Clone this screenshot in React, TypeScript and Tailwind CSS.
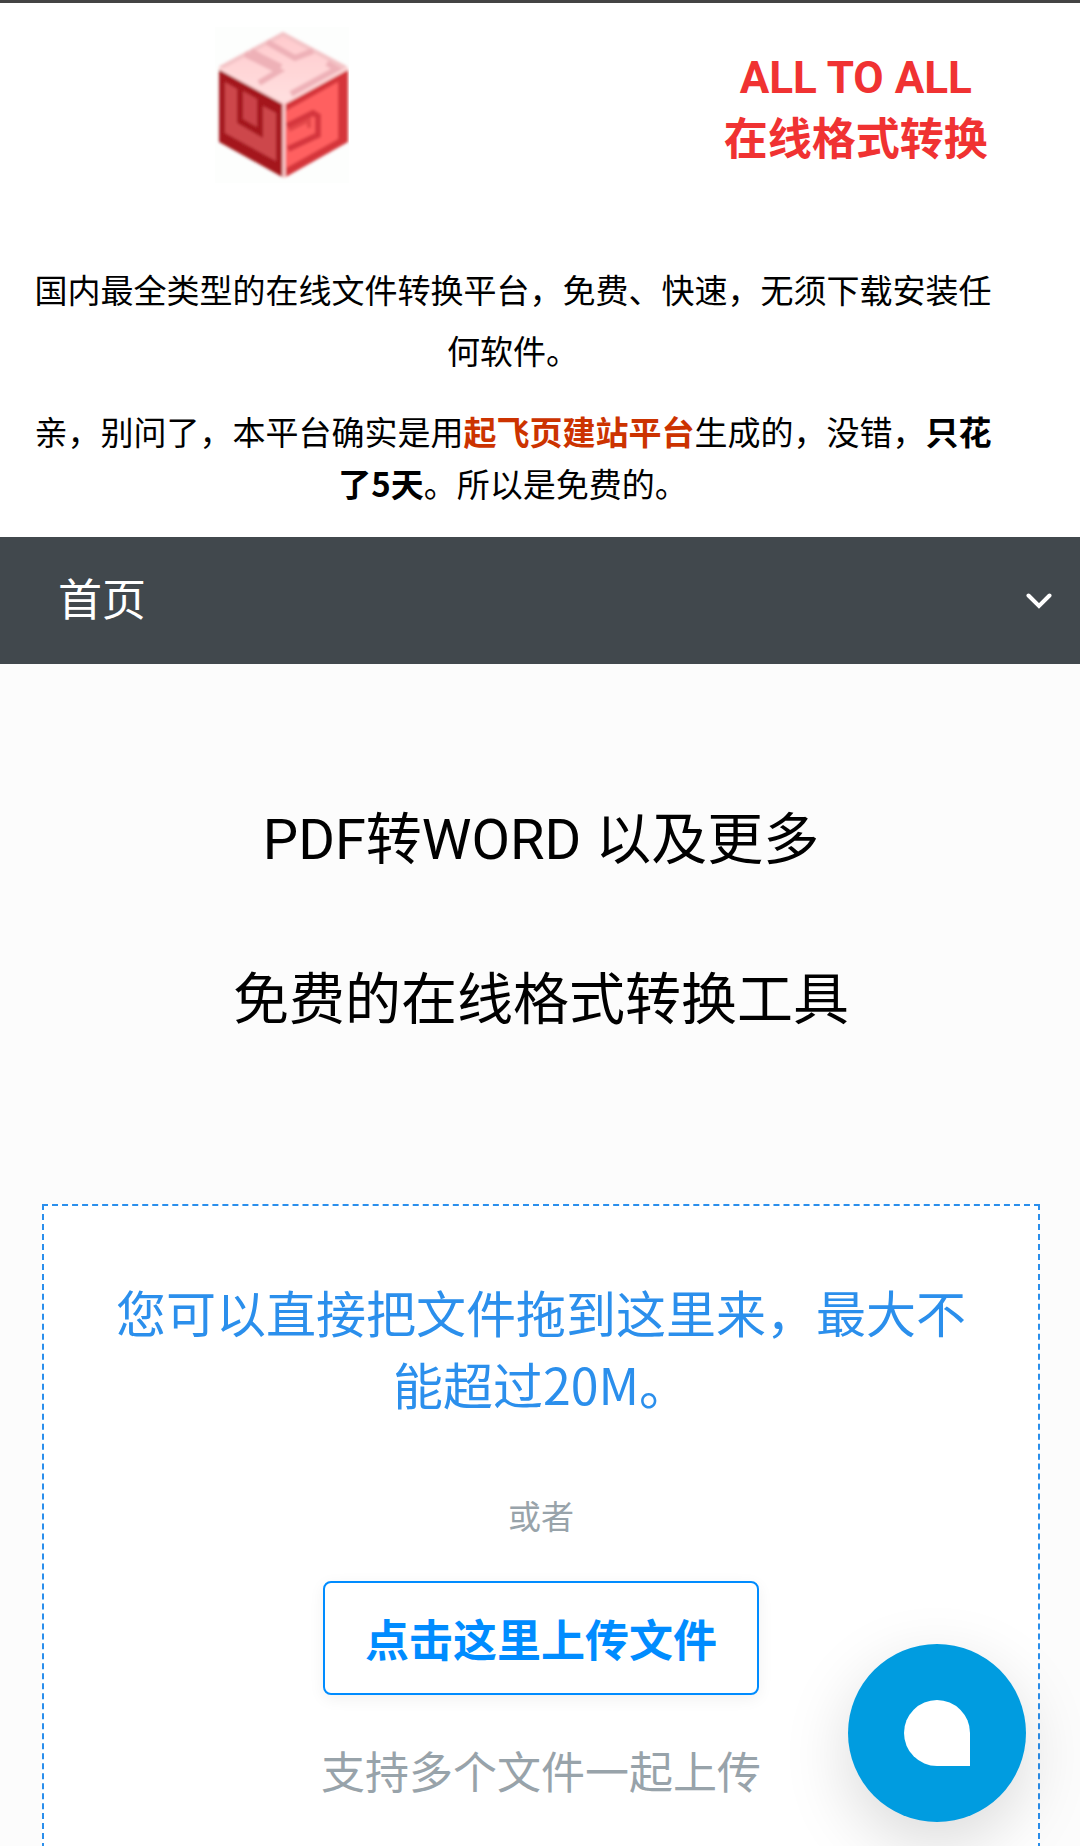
import { useState } from "react";
import { clsx } from "clsx";

const TITLES = ["PDF转WORD 以及更多", "免费的在线格式转换工具"];

const CubeLogo: React.FC = () => {
  return (
    <svg
      viewBox="0 0 134 156"
      className="h-[156px] w-[134px]"
      role="img"
      aria-label="ALL TO ALL"
    >
      <defs>
        <filter id="soft" x="-5%" y="-5%" width="110%" height="110%">
          <feGaussianBlur stdDeviation="1.6" />
        </filter>
        <linearGradient id="top" x1="0" y1="0" x2="0" y2="1">
          <stop offset="0" stopColor="#ffc9cc" />
          <stop offset="1" stopColor="#ffe0e0" />
        </linearGradient>
      </defs>
      <rect width="134" height="156" fill="#fdfefd" />
      <g filter="url(#soft)">
        {/* Top face */}
        <path d="M68 5 L133 42 L69 76 L4 42 Z" fill="url(#top)" />
        <path
          d="M5 41 L68 7 L131 41"
          fill="none"
          stroke="#f3c3c6"
          strokeWidth="4"
        />
        <path
          d="M52 15 L80 31 L98 24 M30 27 L64 44 L44 56 M36 24 L48 31 L66 40 M112 36 L122 42 L76 67"
          fill="none"
          stroke="#eeb1b7"
          strokeWidth="6"
        />
        {/* Left face */}
        <path d="M4 42 L69 77 L69 151 L4 115 Z" fill="#a4131a" />
        <path
          d="M10 55 L22 62 L22 96 L48 111 L48 79 L61 86 L61 134 L10 106 Z"
          fill="#cd464c"
        />
        <path d="M28 64 L42 72 L42 100 L28 92 Z" fill="#cb4348" />
        {/* Right face */}
        <path d="M69 77 L133 42 L133 115 L69 151 Z" fill="#d5343a" />
        <path d="M71 84 L123 55 L123 112 L71 141 Z" fill="#ff6061" />
        <path
          d="M72 99 L98 86 L103 89 L103 108 L73 122"
          fill="none"
          stroke="#d5363c"
          strokeWidth="6"
        />
        <path
          d="M74 103 L94 93 L94 101"
          fill="none"
          stroke="#e2464a"
          strokeWidth="4"
        />
        {/* Edge highlights */}
        <path
          d="M4 41 L69 76 L133 41 M69 76 L69 151"
          fill="none"
          stroke="#ffdcdc"
          strokeWidth="3"
        />
      </g>
    </svg>
  );
};

const Header: React.FC = () => {
  return (
    <header className="border-t-3 border-[#444444] bg-white pb-7">
      <div className="grid h-64 grid-cols-[52%_48%]">
        <div className="flex items-start justify-center pt-6 pl-0.5">
          <CubeLogo />
        </div>
        <h1 className="pt-11 pl-[70px] text-center font-[Roboto,'Noto_Sans_CJK_SC',sans-serif] text-[44px] leading-[62px] font-bold text-[#f03232]">
          ALL TO ALL
          <br />
          在线格式转换
        </h1>
      </div>
      <div className="space-y-6 pr-[82px] pl-7 text-center text-[33px]">
        <p className="leading-[61px]">
          国内最全类型的在线文件转换平台，免费、快速，无须下载安装任何软件。
        </p>
        <p className="leading-[52px]">
          亲，别问了，本平台确实是用
          <a href="#" className="font-bold text-[#cc3300]">
            起飞页建站平台
          </a>
          生成的，没错，<strong>只花了5天</strong>。所以是免费的。
        </p>
      </div>
    </header>
  );
};

const NavBar: React.FC = () => {
  const [open, setOpen] = useState(false);

  return (
    <nav className="bg-[#41484d] text-white">
      <button
        type="button"
        aria-expanded={open}
        onClick={() => setOpen(!open)}
        className="flex h-[127px] w-full items-center justify-between pr-7 pl-[58px] text-[44px]"
      >
        <span className="pb-2">首页</span>
        <svg
          viewBox="0 0 26 16"
          className={clsx("h-4 w-[26px]", open && "rotate-180")}
          fill="none"
          stroke="currentColor"
          strokeWidth="4"
          strokeLinecap="round"
        >
          <path d="M2.5 2.5 L13 13 L23.5 2.5" />
        </svg>
      </button>
    </nav>
  );
};

const UploadBox: React.FC = () => {
  return (
    <section className="mx-10 flex flex-col items-center border-2 border-dashed border-[#2b8fec] bg-white px-[70px] pt-[69px] pb-24 text-center text-[#98a3aa]">
      <p className="text-[50px] leading-[72px] text-[#2b8fec]">
        您可以直接把文件拖到这里来，最大不能超过20M。
      </p>
      <p className="mt-[70px] text-[33px] leading-[52px]">或者</p>
      <button
        type="button"
        className="mt-10 h-[114px] rounded-lg border-2 border-[#008cff] bg-white px-10 text-[44px] font-bold text-[#008cff] shadow-[0_4px_16px_rgba(0,0,0,0.06)]"
      >
        点击这里上传文件
      </button>
      <p className="mt-11 text-[44px] leading-[62px]">支持多个文件一起上传</p>
    </section>
  );
};

const ChatButton: React.FC = () => {
  return (
    <button
      type="button"
      aria-label="在线客服"
      className="fixed right-[54px] bottom-6 flex size-[178px] items-center justify-center rounded-full bg-[#009ce0] shadow-[0_22px_67px_rgba(0,0,0,0.15)]"
    >
      <span className="size-[66px] rounded-full rounded-br-none bg-white" />
    </button>
  );
};

export default function App() {
  return (
    <div className="min-h-screen bg-[#fcfcfc] font-['Noto_Sans_CJK_SC',sans-serif] text-black">
      <Header />
      <NavBar />
      <main className="pl-0.5">
        <div className="space-y-[60px] pt-[126px] pb-[154px] text-center font-[Roboto,'Noto_Sans_CJK_SC',sans-serif] text-[56px] leading-[100px]">
          {TITLES.map((title) => (
            <h2 key={title}>{title}</h2>
          ))}
        </div>
        <UploadBox />
      </main>
      <ChatButton />
    </div>
  );
}
